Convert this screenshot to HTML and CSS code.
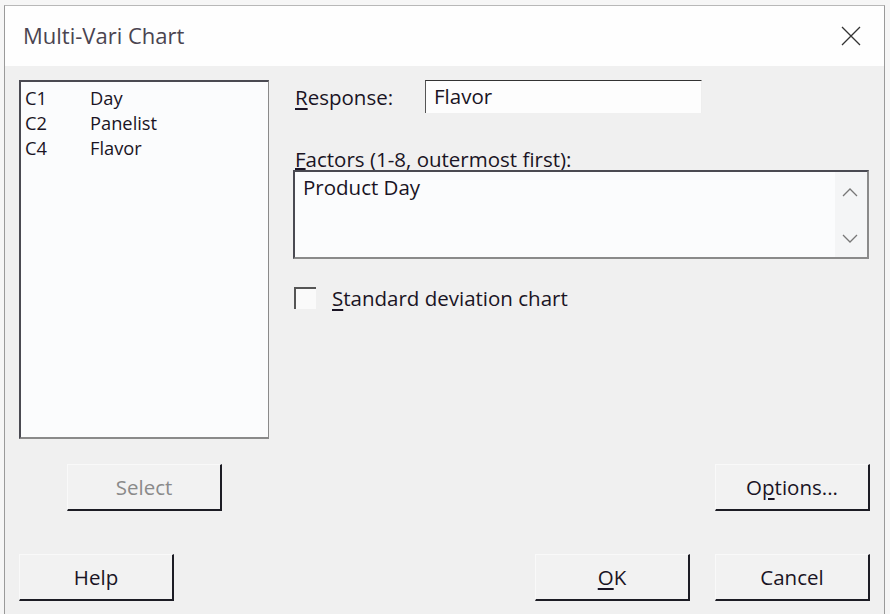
FILE: index.html
```html
<!DOCTYPE html>
<html>
<head>
<meta charset="utf-8">
<link rel="stylesheet" href="styles.css">
</head>
<body>
<div class="window">
  <div class="titlebar">
    <span class="title">Multi-Vari Chart</span>
    <svg class="close" width="20" height="20" viewBox="0 0 20 20"><path d="M1 1 L19 19 M19 1 L1 19" stroke="#333" stroke-width="1.3" fill="none"/></svg>
  </div>
  <div class="content">
    <div class="main">
      <div class="listbox">
        <div class="item"><span class="col">C1</span><span>Day</span></div>
        <div class="item"><span class="col">C2</span><span>Panelist</span></div>
        <div class="item"><span class="col">C4</span><span>Flavor</span></div>
      </div>
      <div class="panel">
        <div class="resp-row">
          <span class="label"><u>R</u>esponse:</span>
          <div class="input">Flavor</div>
        </div>
        <div class="label factors-label"><u>F</u>actors (1-8, outermost first):</div>
        <div class="textarea">
          <div class="ta-text">Product Day</div>
          <div class="scroll">
            <svg width="16" height="10" viewBox="0 0 16 10"><path d="M1 9 L8 2 L15 9" stroke="#777" stroke-width="1.3" fill="none"/></svg>
            <svg width="16" height="10" viewBox="0 0 16 10"><path d="M1 1 L8 8 L15 1" stroke="#777" stroke-width="1.3" fill="none"/></svg>
          </div>
        </div>
        <div class="check-row">
          <span class="checkbox"></span>
          <span class="label"><u>S</u>tandard deviation chart</span>
        </div>
      </div>
    </div>
    <div class="row2">
      <button class="btn disabled select-btn">Select</button>
      <button class="btn">O<u>p</u>tions...</button>
    </div>
    <div class="row3">
      <button class="btn">Help</button>
      <div class="right-btns">
        <button class="btn"><u>O</u>K</button>
        <button class="btn">Cancel</button>
      </div>
    </div>
  </div>
</div>
</body>
</html>
```

FILE: styles.css
```css
html, body {
  margin: 0;
  padding: 0;
  background: #f6f6f6;
  width: 890px;
  height: 614px;
  overflow: hidden;
  font-family: "Open Sans", "Noto Sans", sans-serif;
  color: #1a1424;
}
.window {
  margin: 5px 0 0 4px;
  width: 879px;
  height: 609px;
  border-left: 1px solid #9a9a9a;
  border-top: 1px solid #b8b8b8;
  border-right: 1px solid #9a9a9a;
  display: flex;
  flex-direction: column;
}
.titlebar {
  height: 60px;
  background: #fefefe;
  display: flex;
  align-items: center;
  justify-content: space-between;
  padding: 0 23px 0 18px;
  flex: none;
}
.title {
  font-size: 22px;
  color: #4a4450;
  margin-top: -2px;
}
.content {
  flex: 1;
  background: #f0f0f0;
  padding: 14px 0 0 14px;
  font-size: 20.5px;
}
.main {
  display: flex;
  gap: 24px;
}
.listbox {
  width: 247px;
  height: 352px;
  background: #fbfcfd;
  border-top: 2px solid #4a4a52;
  border-left: 2px solid #4a4a52;
  border-right: 1px solid #8a8a8a;
  border-bottom: 2px solid #8a8a8a;
  padding-top: 3px;
}
.item {
  display: flex;
  align-items: center;
  height: 25px;
  line-height: 25px;
  padding-left: 4px;
  font-size: 18.3px;
}
.col { width: 65px; }
.panel {
  width: 576px;
  display: flex;
  flex-direction: column;
}
.resp-row {
  display: flex;
  align-items: center;
  height: 33px;
}
.label { padding-left: 2px; }
.resp-row .label { width: 130px; }
.input {
  width: 277px;
  height: 33px;
  line-height: 31px;
  background: #fdfdfd;
  border-top: 1px solid #333;
  border-left: 1px solid #555;
  border-right: 1px solid #eee;
  box-sizing: border-box;
  padding-left: 8px;
}
.factors-label {
  margin-top: 36px;
  line-height: 20px;
  height: 20px;
  margin-bottom: 1px;
}
.factors-label u { text-underline-offset: 1px; }
.textarea {
  height: 89px;
  box-sizing: border-box;
  background: #fbfcfd;
  border-top: 2px solid #4a4a52;
  border-left: 2px solid #4a4a52;
  border-right: 2px solid #8a8a8a;
  border-bottom: 2px solid #8a8a8a;
  display: flex;
  justify-content: space-between;
}
.ta-text {
  padding: 2px 0 0 8px;
  line-height: 26px;
}
.scroll {
  width: 32px;
  background: #f4f5f6;
  display: flex;
  flex-direction: column;
  align-items: center;
  justify-content: space-between;
  padding: 15px 3px 13px 0;
  box-sizing: border-box;
}
.check-row {
  margin-top: 28px;
  height: 22px;
  display: flex;
  align-items: center;
  gap: 14px;
}
.checkbox {
  width: 22px;
  height: 22px;
  background: #fafafa;
  border-top: 2px solid #555;
  border-left: 2px solid #555;
  box-sizing: border-box;
  flex: none;
  margin-left: 1px;
}
.row2 {
  margin-top: 25px;
  display: flex;
  justify-content: space-between;
  padding-left: 48px;
  padding-right: 14px;
}
.row3 {
  margin-top: 43px;
  display: flex;
  justify-content: space-between;
  padding-right: 14px;
}
.right-btns {
  display: flex;
  gap: 25px;
}
.btn {
  width: 155px;
  height: 47px;
  box-sizing: border-box;
  background: #f2f2f2;
  border: none;
  border-top: 1px solid #f9f9f9;
  border-left: 1px solid #f9f9f9;
  border-right: 2px solid #1c1c24;
  border-bottom: 2px solid #1c1c24;
  font-family: inherit;
  font-size: 20.5px;
  color: #1a1424;
  padding: 0;
}
.btn.disabled { color: #8a8a8a; }
u { text-underline-offset: 3px; }
```
